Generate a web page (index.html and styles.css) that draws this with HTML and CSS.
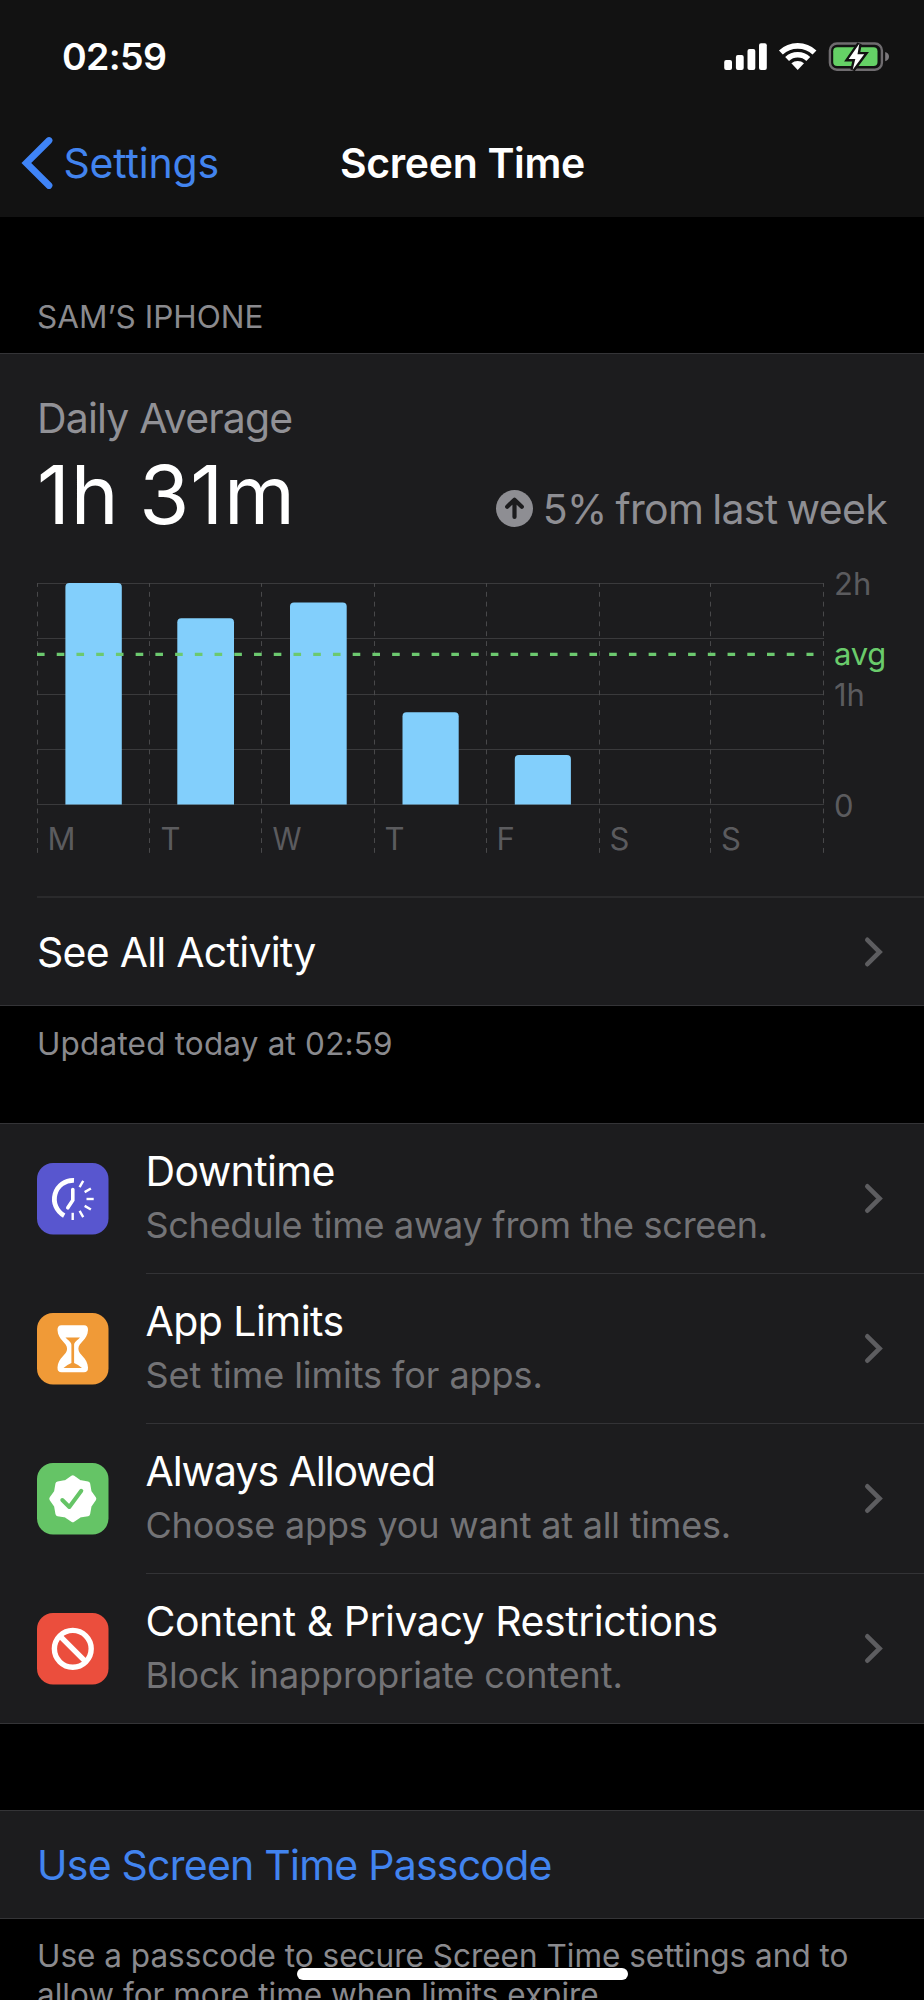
FILE: index.html
```html
<!DOCTYPE html>
<html lang="en">
<head>
<meta charset="utf-8">
<title>Screen Time</title>
<link rel="stylesheet" href="styles.css">
</head>
<body>
<svg width="0" height="0" class="defs" aria-hidden="true">
  <symbol id="chevron" viewBox="0 0 20 32"><path d="M4.3 3.8 L16.6 16 L4.3 28.2" fill="none" stroke="#5d5d60" stroke-width="4.6" stroke-linecap="round" stroke-linejoin="miter"/></symbol>
</svg>
<div class="screen">
  <header class="header">
    <div class="status">
      <span class="time">02:59</span>
      <svg class="status-icons" width="168" height="32" viewBox="722 40 168 32">
        <g fill="#fff">
          <rect x="724.2" y="60" width="7.8" height="10" rx="2"/>
          <rect x="735.9" y="55" width="7.8" height="15" rx="2"/>
          <rect x="747.5" y="49" width="7.8" height="21" rx="2"/>
          <rect x="759" y="43.3" width="7.8" height="26.7" rx="2"/>
          <path d="M797.7 70 L791.4 63.3 A9.4 9.4 0 0 1 804 63.3 Z"/>
        </g>
        <g fill="none" stroke="#fff" stroke-width="5.6">
          <path d="M780.9 52.6 A24.3 24.3 0 0 1 814.5 52.6"/>
          <path d="M787.1 59 A15.4 15.4 0 0 1 808.3 59"/>
        </g>
        <rect x="829.9" y="43.5" width="52" height="26.2" rx="7" fill="none" stroke="#6f6c6f" stroke-width="2.4"/>
        <path d="M885.2 52 Q889 53 889 56.6 Q889 60.2 885.2 61.3 Z" fill="#7c797c"/>
        <rect x="833.2" y="47.3" width="44.3" height="18.8" rx="4" fill="#65d166"/>
        <path d="M859.3 43.8 L848.7 59 H855.3 L852.7 69.8 L864.2 54.3 H857.5 Z" fill="#fff" stroke="#121212" stroke-width="4.8" paint-order="stroke"/>
      </svg>
    </div>
    <nav class="nav">
      <a class="back">
        <svg width="34" height="56" viewBox="0 0 34 56"><path d="M29 5.5 L6.3 28 L29 50.5" fill="none" stroke="#3f84f7" stroke-width="6.8" stroke-linecap="round"/></svg>
        <span>Settings</span>
      </a>
      <h1 class="title">Screen Time</h1>
    </nav>
  </header>

  <h2 class="section-label">SAM’S IPHONE</h2>
  <section class="card">
    <div class="summary">
      <div class="caption">Daily Average</div>
      <div class="figures">
        <span class="total">1h 31m</span>
        <span class="trend">
          <svg width="37" height="37" viewBox="-18.5 -18.5 37 37"><circle r="18.5" fill="#8e8e93"/><path d="M0 8.5 V-8 M-7.3 -1.8 L0 -8.8 L7.3 -1.8" fill="none" stroke="#1c1c1e" stroke-width="4.2" stroke-linecap="round" stroke-linejoin="round"/></svg>
          <span class="trend-text">5% from last week</span>
        </span>
      </div>
      <svg class="chart" width="850" height="272" viewBox="0 0 850 272">
        <g fill="none" stroke="#3a3a3c" stroke-width="1">
          <path d="M0 .5H787 M0 55.5H787 M0 111.5H787 M0 166.5H787 M0 221.5H787"/>
          <path stroke="#48484a" stroke-dasharray="4.9 4.95" stroke-dashoffset="1" d="M.5 0V271 M112.5 0V271 M224.5 0V271 M337.5 0V271 M449.5 0V271 M562.5 0V271 M673.5 0V271 M786.5 0V271"/>
        </g>
        <g fill="#82cffc">
          <path d="M28.4 221.5V4q0-4 4-4h48.4q4 0 4 4V221.5z"/>
          <path d="M140.3 221.5V39.3q0-4 4-4h48.7q4 0 4 4V221.5z"/>
          <path d="M253 221.5V23.6q0-4 4-4h48.7q4 0 4 4V221.5z"/>
          <path d="M365.5 221.5V133.3q0-4 4-4h48.2q4 0 4 4V221.5z"/>
          <path d="M477.8 221.5V176q0-4 4-4h48.1q4 0 4 4V221.5z"/>
        </g>
        <path d="M0 71.4H776.5" stroke="#6cc96f" stroke-width="3.3" stroke-dasharray="7.6 12.13"/>
        <g class="axis">
          <text x="10.5" y="267">M</text>
          <text x="123.5" y="267">T</text>
          <text x="235.5" y="267" textLength="29" lengthAdjust="spacingAndGlyphs">W</text>
          <text x="347.5" y="267">T</text>
          <text x="459.5" y="267">F</text>
          <text x="572.5" y="267">S</text>
          <text x="684" y="267">S</text>
          <text x="797" y="11.7">2h</text>
          <text x="797" y="122.5">1h</text>
          <text x="797" y="233.5">0</text>
          <text class="avg" x="797" y="81.5">avg</text>
        </g>
      </svg>
    </div>
    <a class="row-link">
      <span class="see-all">See All Activity</span>
      <svg class="chev" width="20" height="32"><use href="#chevron"/></svg>
    </a>
  </section>
  <p class="note updated">Updated today at 02:59</p>

  <section class="card list">
    <a class="item">
      <svg class="badge" width="72" height="72" viewBox="0 0 72 72">
        <rect width="71.5" height="71.5" rx="16" fill="#5856cf"/>
        <path d="M37 17.3 A18.8 18.8 0 0 0 27.2 52.6" fill="none" stroke="#fff" stroke-width="4.8"/>
        <path d="M35.8 26.5 V37.2 L30.8 44.8" fill="none" stroke="#fff" stroke-width="3.6" stroke-linecap="round"/>
        <g transform="translate(35.7 36)" stroke="#fff" stroke-width="2.4">
          <path transform="rotate(30)" d="M0-13.8V-21"/><path transform="rotate(60)" d="M0-13.8V-21"/><path transform="rotate(90)" d="M0-13.8V-21"/><path transform="rotate(120)" d="M0-13.8V-21"/><path transform="rotate(150)" d="M0-13.8V-21"/><path transform="rotate(180)" d="M0-13.8V-21"/>
        </g>
      </svg>
      <span class="item-text"><span class="item-title t1">Downtime</span><span class="item-sub s1">Schedule time away from the screen.</span></span>
      <svg class="chev" width="20" height="32"><use href="#chevron"/></svg>
    </a>
    <a class="item">
      <svg class="badge" width="72" height="72" viewBox="0 0 72 72">
        <rect width="71.5" height="71.5" rx="16" fill="#f09a37"/>
        <path d="M24.5 12.2 H47 Q51.2 12.2 51 17 C50.6 27 41.4 29.5 41.4 35.7 C41.4 42 50.6 44.5 51 54.5 Q51.2 59.3 47 59.3 H24.5 Q20.3 59.3 20.5 54.5 C20.9 44.5 30.1 42 30.1 35.7 C30.1 29.5 20.9 27 20.5 17 Q20.3 12.2 24.5 12.2 Z" fill="#fff"/>
        <path d="M28.5 24.6 H43 C40.5 27.5 37.1 29 37.1 32 V50 Q41 51.3 45 55 H26.5 Q30.5 51.3 34.4 50 V32 C34.4 29 31 27.5 28.5 24.6 Z" fill="#f09a37"/>
      </svg>
      <span class="item-text"><span class="item-title t2">App Limits</span><span class="item-sub s2">Set time limits for apps.</span></span>
      <svg class="chev" width="20" height="32"><use href="#chevron"/></svg>
    </a>
    <a class="item">
      <svg class="badge" width="72" height="72" viewBox="0 0 72 72">
        <rect width="71.5" height="71.5" rx="16" fill="#65c466"/>
        <path transform="translate(35.8 35.8)" d="M0-21 L6.7-16.3 L14.9-14.9 L16.3-6.7 L21 0 L16.3 6.7 L14.9 14.9 L6.7 16.3 L0 21 L-6.7 16.3 L-14.9 14.9 L-16.3 6.7 L-21 0 L-16.3-6.7 L-14.9-14.9 L-6.7-16.3 Z" fill="#fff" stroke="#fff" stroke-width="5" stroke-linejoin="round"/>
        <path d="M25.3 37 L32.3 44 L44.3 27.8" fill="none" stroke="#65c466" stroke-width="4" stroke-linecap="round" stroke-linejoin="round"/>
      </svg>
      <span class="item-text"><span class="item-title t3">Always Allowed</span><span class="item-sub s3">Choose apps you want at all times.</span></span>
      <svg class="chev" width="20" height="32"><use href="#chevron"/></svg>
    </a>
    <a class="item">
      <svg class="badge" width="72" height="72" viewBox="0 0 72 72">
        <rect width="71.5" height="71.5" rx="16" fill="#eb4e3d"/>
        <g fill="none" stroke="#fff" stroke-width="5.4"><circle cx="35.8" cy="35.8" r="18.4"/><path d="M22.8 22.8 L48.8 48.8"/></g>
      </svg>
      <span class="item-text"><span class="item-title t4">Content &amp; Privacy Restrictions</span><span class="item-sub s4">Block inappropriate content.</span></span>
      <svg class="chev" width="20" height="32"><use href="#chevron"/></svg>
    </a>
  </section>

  <section class="card passcode"><a class="action">Use Screen Time Passcode</a></section>
  <p class="note">Use a passcode to secure Screen Time settings and to<br>allow for more time when limits expire.</p>
  <div class="home-indicator"></div>
</div>
</body>
</html>
```

FILE: styles.css
```css
* { box-sizing: border-box; }
body { margin: 0; background: #000; }
h1, h2, p { margin: 0; font-weight: 400; }
svg { display: block; flex: none; }
.defs { position: absolute; }

.screen {
  position: relative;
  width: 924px;
  height: 2000px;
  overflow: hidden;
  background: #000;
  color: #fff;
  font-family: Inter, "Liberation Sans", sans-serif;
  font-size: 41px;
  white-space: nowrap;
}

.header { height: 217px; background: #121212; }
.status {
  display: flex;
  align-items: center;
  justify-content: space-between;
  height: 109px;
  padding: 4px 34px 0 62px;
}
.status-icons { margin-bottom: 1px; }
.time { font-size: 37.5px; font-weight: 600; line-height: 46px; letter-spacing: -0.65px; }
.nav {
  display: grid;
  grid-template-columns: 340px auto 1fr;
  align-items: center;
  height: 108px;
}
.back { display: flex; align-items: center; gap: 10px; padding-left: 19.5px; color: #4284ef; letter-spacing: -0.2px; }
.title { font-size: 41px; font-weight: 600; letter-spacing: -0.35px; }

.section-label {
  height: 136px;
  padding: 80px 37px 0;
  font-size: 31.5px;
  line-height: 40px;
  color: #8a8a8e;
}

.card { background: #1c1c1e; border-top: 1px solid #343437; border-bottom: 1px solid #343437; }
.summary { height: 542px; padding: 39px 37px 0; }
.caption { line-height: 50px; color: #919196; letter-spacing: -0.85px; }
.figures {
  display: flex;
  align-items: baseline;
  justify-content: space-between;
  height: 90px;
  margin-top: 7px;
}
.total { font-size: 81px; line-height: 90px; letter-spacing: 0.9px; word-spacing: -4px; }
.trend {
  display: flex;
  align-items: center;
  gap: 10px;
  padding-top: 3px;
  line-height: 50px;
  color: #8e8e93;
  letter-spacing: -0.65px;
  word-spacing: -2px;
}
.trend-text { position: relative; top: 3px; }
.trend svg { position: relative; top: 3px; }
.chart { margin-top: 43px; overflow: visible; }
.axis { font-size: 31px; fill: #5b5b5e; }
.axis .avg { fill: #6acb6b; letter-spacing: -0.3px; }

.row-link {
  display: flex;
  align-items: center;
  justify-content: space-between;
  height: 109px;
  margin-left: 37px;
  padding-right: 41px;
  border-top: 2px solid #2a2a2c;
}
.see-all { letter-spacing: -0.75px; }

.note { padding: 17px 37px 0; font-size: 31.5px; line-height: 39.4px; color: #8a8a8e; }
.updated { height: 117px; padding-top: 18px; letter-spacing: 0.18px; }

.item { display: flex; align-items: center; height: 150px; padding-left: 37px; }
.item:last-child { height: 149px; }
.item-text {
  display: flex;
  flex-direction: column;
  justify-content: center;
  flex: 1;
  height: 100%;
  padding-bottom: 2px;
  margin-left: 36.5px;
  border-bottom: 1px solid #333336;
}
.item:last-child .item-text { border-bottom: 0; padding-bottom: 1px; }
.item .chev { align-self: stretch; height: 100%; width: 61px; border-bottom: 1px solid #333336; padding-right: 41px; }
.item:last-child .chev { border-bottom: 0; }
.item-title, .item-sub { line-height: 54px; }
.item-sub { font-size: 36px; color: #737376; }
.t1 { letter-spacing: -0.64px; }
.t2 { letter-spacing: -0.56px; }
.t3 { letter-spacing: -1.05px; }
.t4 { letter-spacing: -0.46px; }
.s1 { letter-spacing: -0.27px; }
.s2 { letter-spacing: -0.05px; }
.s3 { letter-spacing: -0.19px; }
.s4 { letter-spacing: -0.1px; }

.passcode { height: 109px; margin-top: 86px; }
.action { display: block; padding-left: 37px; line-height: 109px; color: #4284ef; letter-spacing: -0.76px; }

.home-indicator {
  position: absolute;
  left: 297px;
  top: 1968px;
  width: 331px;
  height: 12px;
  border-radius: 6px;
  background: #fff;
}
```
